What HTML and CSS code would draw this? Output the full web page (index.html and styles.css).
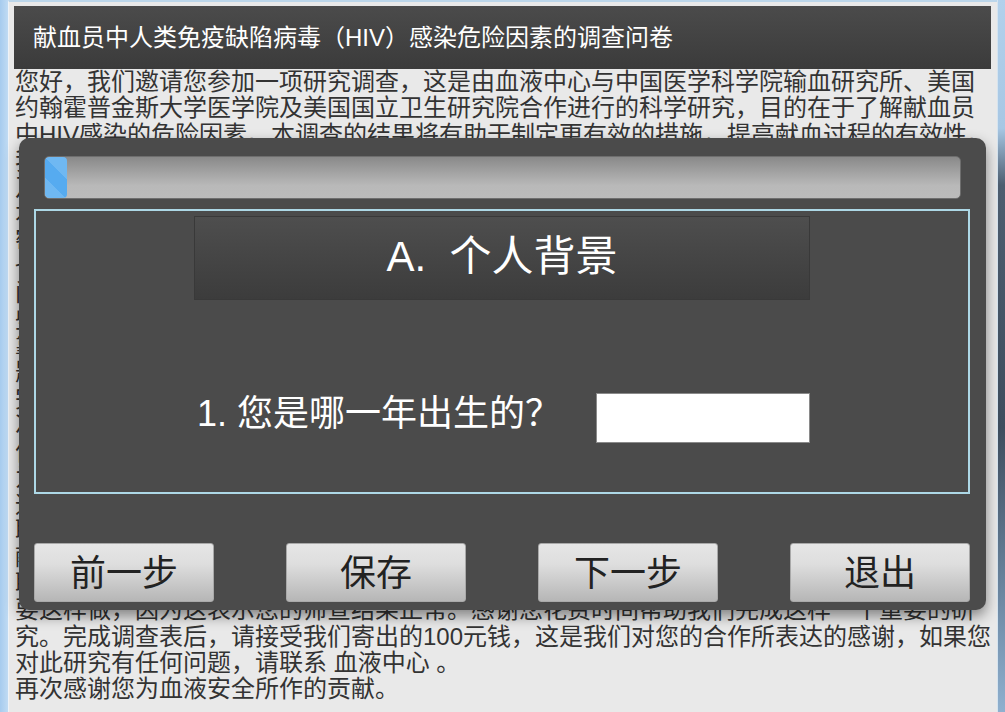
FILE: index.html
```html
<!DOCTYPE html>
<html lang="zh-CN">

<head>
    <meta charset="UTF-8">
    <meta name="viewport" content="width=device-width, initial-scale=1.0">
    <title>献血员中人类免疫缺陷病毒（HIV）感染危险因素的调查问卷</title>
    <link rel="stylesheet" href="styles.css">
</head>

<body>

    <div class="window">
        <div class="frame-left"></div>

        <div class="page">
            <div class="title-bar">献血员中人类免疫缺陷病毒（HIV）感染危险因素的调查问卷</div>

            <div class="intro">
                <p>您好，我们邀请您参加一项研究调查，这是由血液中心与中国医学科学院输血研究所、美国约翰霍普金斯大学医学院及美国国立卫生研究院合作进行的科学研究，目的在于了解献血员中HIV感染的危险因素。本调查的结果将有助于制定更有效的措施，提高献血过程的有效性。</p>
                <p>我们会询问您一些关于您个人背景以及可能与感染有关的行为方面的问题，其中有些问题涉及个人隐私，可能会让您感到不舒服。您可以拒绝回答任何问题，也可以随时退出本调查。</p>
                <p>本调查采用匿名方式进行，问卷上不会出现您的姓名，您所提供的全部信息都将被严格地保密，只用于本项研究的统计分析。除研究人员以外，任何人都无法看到您的答案，调查结果也不会对您的献血资格产生任何影响。</p>
                <p>问卷中的问题包括您的个人背景、健康状况、献血经历以及一些可能与感染有关的行为。有些问题可能会涉及您的个人隐私，也可能会让您感到不太舒服，但是为了使研究结果真实可靠，请您尽可能如实地回答每一个问题。如果您对某个问题不愿意回答，可以选择跳过该问题，继续回答下面的问题。</p>
                <p>完成这份问卷大约需要二十分钟的时间。您可以在任何时候停止填写，也可以在保存之后下次再继续填写。您的参与完全是自愿的，是否参加本项调查不会影响您今后的献血。如有任何疑问，可以随时向工作人员咨询。</p>
                <p>为了感谢您的参与，我们将在您完成问卷之后向您寄出一份酬谢。我们还会将您的筛查结果通过邮寄的方式通知您。如果您的筛查结果有任何异常，工作人员会尽快通过电话和您取得联系，并为您提供免费的咨询。</p>
                <p>献血后，血液中心将对您的血液进行检测。如果检测结果显示有异常，我们会通过您留下的联系方式通知您前来复查并接受咨询。如果您在两周之内没有收到任何通知，则说明您不需要这样做，因为这表示您的筛查结果正常。感谢您花费时间帮助我们完成这样一个重要的研究。完成调查表后，请接受我们寄出的100元钱，这是我们对您的合作所表达的感谢，如果您对此研究有任何问题，请联系 血液中心 。</p>
                <p>再次感谢您为血液安全所作的贡献。</p>
            </div>
        </div>

        <div class="frame-right"></div>
    </div>

    <div class="dialog">
        <div class="progress">
            <div class="progress-bar" style="width: 22px;"></div>
        </div>

        <div class="section">
            <div class="section-title">A.&nbsp;&nbsp;个人背景</div>

            <div class="question">
                <label for="birth_year">1. 您是哪一年出生的？</label>
                <input type="text" id="birth_year" name="birth_year" class="answer">
            </div>
        </div>

        <div class="actions">
            <button type="button" class="btn">前一步</button>
            <button type="button" class="btn">保存</button>
            <button type="button" class="btn">下一步</button>
            <button type="button" class="btn">退出</button>
        </div>
    </div>

</body>

</html>
```

FILE: styles.css
```css
* {
    margin: 0;
    padding: 0;
    box-sizing: border-box;
    font-family: 'Liberation Sans', 'Noto Sans CJK SC', sans-serif;
}

body {
    width: 1005px;
    height: 712px;
    overflow: hidden;
    background-color: #e9e9e9;
}

.window {
    display: flex;
    height: 712px;
}

.frame-left {
    width: 8px;
    background: linear-gradient(to right, #a6cbee, #c0dbf3);
}

.frame-right {
    width: 8px;
    border-left: 1px solid #d6e4ef;
    background: linear-gradient(#b2d1ec 0, #a7c7e4 18%, #4d5e70 26%, #3e4d5e 60%, #6f8ba6 85%, #8fb0cf 100%);
}

.page {
    flex: 1;
    background-color: #e9e9e9;
    border-left: 1px solid #eef3f8;
    border-top: 2px solid #bcd6ea;
    padding: 4px 5px 0 5px;
}

.title-bar {
    height: 63px;
    margin-right: 1px;
    padding-left: 19px;
    line-height: 63px;
    font-size: 24px;
    color: #ffffff;
    background: linear-gradient(#4b4b4b, #3b3b3b);
}

.intro {
    padding-left: 1px;
    font-size: 24px;
    line-height: 26.4px;
    color: #333333;
}

/* question dialog on top of the introduction */
.dialog {
    position: absolute;
    left: 19px;
    top: 138px;
    width: 967px;
    height: 472px;
    padding: 18px 16px 8px 15px;
    background-color: #4b4b4b;
    border-radius: 10px;
    box-shadow: 0px 6px 14px rgba(0, 0, 0, 0.45);
    display: flex;
    flex-direction: column;
}

.progress {
    height: 43px;
    margin: 0 9px 0 10px;
    border: 1px solid #6e6e6e;
    border-radius: 5px;
    background: linear-gradient(#898989, #a8a8a8 45%, #b9b9b9 70%, #bbbbbb);
    overflow: hidden;
}

.progress-bar {
    height: 100%;
    border-radius: 4px;
    background-color: #56abf0;
    background-image: linear-gradient(45deg, rgba(255, 255, 255, 0.15) 25%, transparent 25%, transparent 50%, rgba(255, 255, 255, 0.15) 50%, rgba(255, 255, 255, 0.15) 75%, transparent 75%, transparent);
    background-size: 40px 40px;
}

.section {
    height: 285px;
    margin-top: 10px;
    border: 2px solid #add8e6;
    display: flex;
    flex-direction: column;
    align-items: center;
}

.section-title {
    width: 616px;
    height: 84px;
    margin-top: 5px;
    border: 1px solid #393939;
    background: linear-gradient(#4e4e4e, #3c3c3c);
    color: #ffffff;
    font-size: 42px;
    line-height: 80px;
    text-align: center;
}

.question {
    width: 616px;
    margin-top: 93px;
    padding-left: 3px;
    display: flex;
    justify-content: space-between;
    align-items: center;
}

.question label {
    align-self: flex-start;
    color: #ffffff;
    font-size: 36px;
    line-height: 42px;
}

.answer {
    width: 214px;
    height: 50px;
    border: 1px solid #8a8a8a;
    background: #ffffff;
    outline: none;
}

.actions {
    margin-top: 49px;
    display: flex;
    justify-content: space-between;
}

.btn {
    width: 180px;
    height: 59px;
    padding-bottom: 6px;
    border: 1px solid #a9a9a9;
    border-radius: 3px;
    background: linear-gradient(#e6e6e6, #dedede 35%, #b6b6b6);
    color: #222222;
    font-size: 36px;
    cursor: pointer;
}

.btn:hover {
    background: linear-gradient(#f0f0f0, #c4c4c4);
}
```
